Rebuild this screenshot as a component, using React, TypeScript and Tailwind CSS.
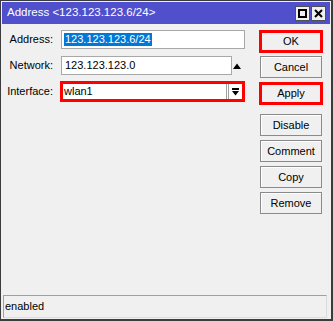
import React from "react";

const font = { fontFamily: '"Liberation Sans", Arial, sans-serif' };

function Btn({ label, red }: { label: string; red?: boolean }) {
  if (red) {
    return (
      <div className="-ml-px w-[64px] h-[23px] border-[3px] border-[#ff0000] bg-[#f0f0f0] flex items-center justify-center text-[11px] text-black">
        {label}
      </div>
    );
  }
  return (
    <div className="w-[62px] h-[22px] border border-[#8a8a8a] bg-[#f0f0f0] shadow-[inset_1px_1px_0_#ffffff] flex items-center justify-center text-[11px] text-black">
      {label}
    </div>
  );
}

export default function App() {
  return (
    <div
      style={font}
      className="w-[333px] h-[321px] flex flex-col bg-[#f0f0f0] border-l border-t border-r-2 border-b-2 border-[#3c3c3c] p-px text-[11px] text-black"
    >
      {/* title bar */}
      <div className="h-[22px] bg-[#5050cc] flex items-center pl-[5px] pr-[4px] shrink-0">
        <span className="text-white text-[11.5px] leading-none flex-1">Address &lt;123.123.123.6/24&gt;</span>
        <div className="w-[15px] h-[15px] bg-[#f0f0f0] border border-[#505050] flex items-center justify-center">
          <div className="w-[9px] h-[9px] border-2 border-black" />
        </div>
        <div className="w-[15px] h-[15px] ml-px bg-[#f0f0f0] border border-[#505050] flex items-center justify-center">
          <svg width="9" height="9" viewBox="0 0 9 9">
            <path d="M1 1 L8 8 M8 1 L1 8" stroke="#000" strokeWidth="2" />
          </svg>
        </div>
      </div>

      {/* body */}
      <div className="flex flex-1 min-h-0">
        <div className="w-[258px] pt-[6px] flex flex-col">
          <div className="flex items-center h-[19px]">
            <div className="w-[52px] text-right pr-px">Address:</div>
            <div className="ml-[7px] w-[184px] h-[19px] bg-white border border-[#a8a8a8] flex items-center pl-[2px]">
              <span className="bg-[#0078d7] text-white leading-[13px] px-px">123.123.123.6/24</span>
            </div>
          </div>
          <div className="flex items-center h-[19px] mt-[7px]">
            <div className="w-[52px] text-right pr-px">Network:</div>
            <div className="ml-[7px] w-[171px] h-[19px] bg-white border border-[#a8a8a8] flex items-center pl-[3px]">
              123.123.123.0
            </div>
            <svg className="ml-[1px]" width="8" height="6" viewBox="0 0 8 6">
              <polygon points="0,6 8,6 4,0.5" fill="#000" />
            </svg>
          </div>
          <div className="flex items-center h-[21px] mt-[6px]">
            <div className="w-[52px] text-right pr-px">Interface:</div>
            <div className="ml-[6px] w-[185px] h-[21px] border-[3px] border-[#ff0000] bg-white flex items-center">
              <div className="flex-1 pl-px">wlan1</div>
              <div className="h-full w-[3px] border-l border-r border-[#a0a0a0]" />
              <div className="w-[13px] h-full flex items-center justify-center">
                <svg width="7" height="8" viewBox="0 0 7 8">
                  <rect x="0" y="0" width="7" height="2" fill="#000" />
                  <polygon points="0,3 7,3 3.5,7.5" fill="#000" />
                </svg>
              </div>
            </div>
          </div>
        </div>

        <div className="w-[62px] pt-[6px] flex flex-col">
          <Btn label="OK" red />
          <div className="mt-[3px]"><Btn label="Cancel" /></div>
          <div className="mt-[4px]"><Btn label="Apply" red /></div>
          <div className="mt-[9px]"><Btn label="Disable" /></div>
          <div className="mt-[4px]"><Btn label="Comment" /></div>
          <div className="mt-[4px]"><Btn label="Copy" /></div>
          <div className="mt-[4px]"><Btn label="Remove" /></div>
        </div>
      </div>

      {/* status bar */}
      <div className="ml-px mr-[3px] h-[23px] shrink-0 border-t border-l border-[#a0a0a0] border-r border-b border-r-[#dcdcdc] border-b-[#dcdcdc] flex items-center pl-px">
        enabled
      </div>
    </div>
  );
}
